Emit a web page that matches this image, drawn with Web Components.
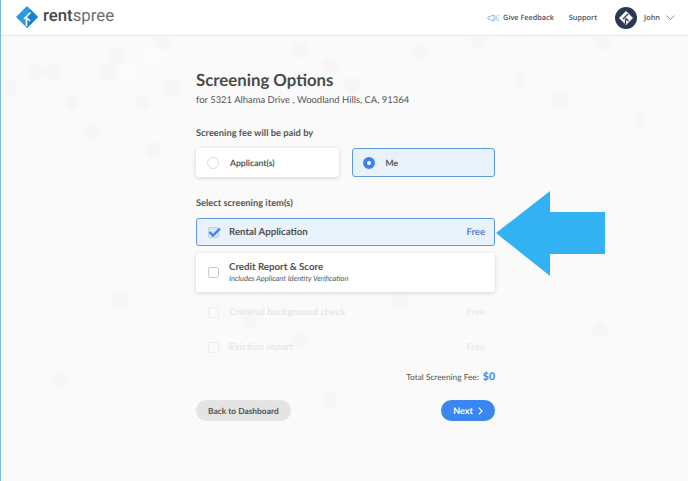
<!DOCTYPE html>
<html lang="en"><head><meta charset="utf-8"><title>Screening Options</title>
<style>
html,body{margin:0;padding:0;height:100%}
body{font-family:Lato,"Open Sans",sans-serif;background:#fafafa;color:#444;overflow:hidden;text-rendering:geometricPrecision}
</style></head><body>
<rs-app></rs-app>
<script>
class RsHeader extends HTMLElement{constructor(){super();this.attachShadow({mode:'open'}).innerHTML=`
<style>
:host{display:flex;align-items:center;height:35px;background:#fff;border-bottom:1px solid #e6e6e6;box-sizing:content-box;padding:0 13px 0 16px;position:relative;z-index:2}
.logo{display:flex;align-items:center;gap:5px}
.logo svg{display:block;margin-top:-2px}
.word{font:400 16.800px/22px Roboto,sans-serif;color:#6a6e72;margin-top:-3px}
.word b{font-weight:500;color:#44484d}
nav{margin-left:auto;display:flex;align-items:center;font:600 7.300px/12px "Open Sans",sans-serif;color:#4c5157}
.fb{display:flex;align-items:center;gap:4px;margin-right:15px}
.av{margin:0 7px 0 18px;display:block}
.chev{margin-left:6px;display:block}
</style>
<div class="logo"><svg width="22" height="22" viewBox="0 0 22 22"><path d="M11 0 L22 11 L11 22 L0 11 Z" fill="#2b9be3"/><path d="M14 3 L22 11 L11 22 L11 19 Z" fill="#1a82cc"/><path d="M8 13 L14.500 6.500 M10.500 12 L10.500 20 M11 12 L14 15" fill="none" stroke="#fff" stroke-width="1.600"/></svg><span class="word"><b>rent</b>spree</span></div>
<nav><span class="fb"><svg width="12" height="8" viewBox="0 0 12 8" fill="none" stroke="#8fbce8" stroke-width="1"><path d="M1 3 L7 1 V7 L1 5 Z"/><path d="M9 1.500 V6.500M10.500 2 L12 1M10.500 4 H12M10.500 6 L12 7"/></svg>Give Feedback</span><span>Support</span>
<svg class="av" width="22" height="22" viewBox="0 0 22 22"><circle cx="11" cy="11" r="11" fill="#2a3a52"/><path d="M11 4 L18 11 L11 18 L4 11 Z" fill="#fff"/><path d="M8 12 L13 7 M10.500 11.500 V17 M11 11.500 L13.500 14" fill="none" stroke="#2a3a52" stroke-width="1.300"/></svg>
<span>John</span><svg class="chev" width="9" height="5" viewBox="0 0 9 5" fill="none" stroke="#777" stroke-width=".8"><path d="M.5 .5 L4.500 4.500 L8.500 .5"/></svg></nav>`}}
customElements.define('rs-header',RsHeader);

class RsChoice extends HTMLElement{constructor(){super();this.attachShadow({mode:'open'}).innerHTML=`
<style>
:host{display:flex;align-items:center;box-sizing:border-box;height:29px;flex:1;border-radius:3px;padding-left:11px;gap:11px;background:#fff;box-shadow:0 1px 4px rgba(0,0,0,.16);font:700 8.600px/12px Lato,sans-serif;color:#555}
:host([selected]){background:#e9f1fb;border:1px solid #5a9be4;box-shadow:none;padding-left:10px}
i{width:10px;height:10px;border-radius:50%;border:1px solid #ddd;background:#fff;display:block;flex:none}
:host([selected]) i{width:4px;height:4px;border:4px solid #3b82ee;background:#fff}
</style><i></i><slot></slot>`}}
customElements.define('rs-choice',RsChoice);

class RsItem extends HTMLElement{constructor(){super();this.attachShadow({mode:'open'}).innerHTML=`
<style>
:host{display:flex;align-items:center;box-sizing:border-box;height:28px;padding:0 10px 0 12px;border-radius:3px;background:#fff;box-shadow:0 1px 4px rgba(0,0,0,.15);font:700 9.700px/13px Lato,sans-serif;color:#505050}
:host([selected]){background:#e9f1fb;border:1px solid #5a9be4;box-shadow:none;padding:0 9px 0 11px}
:host([tall]){height:39px}
:host([disabled]){background:transparent;box-shadow:0 1px 2px rgba(0,0,0,.012);color:#e8e8e8}
.box{width:11px;height:11px;box-sizing:border-box;border:1px solid #ccc;border-radius:2px;background:#fff;margin-right:10px;flex:none;position:relative}
:host([selected]) .box{border-color:#b9d0ec;background:#d9e7f8}
:host([disabled]) .box{border-color:#eee;background:transparent}
svg{position:absolute;left:-1px;top:-2px;display:none}
:host([selected]) svg{display:block}
.t{flex:1;min-width:0}
.sub{display:block;font:italic 400 7.500px/10px Lato,sans-serif;color:#555}
.fee{color:#5c85d6;font-size:9.500px}
:host([disabled]) .fee{color:#ececec}
</style>
<div class="box"><svg width="13" height="12" viewBox="0 0 13 12"><path d="M1.500 6 L5 9.500 L12 2.500" fill="none" stroke="#3b82ee" stroke-width="2.400"/></svg></div>
<div class="t"><slot></slot><span class="sub"><slot name="sub"></slot></span></div>
<span class="fee"><slot name="fee"></slot></span>`}}
customElements.define('rs-item',RsItem);

class RsButton extends HTMLElement{constructor(){super();this.attachShadow({mode:'open'}).innerHTML=`
<style>
:host{display:inline-flex;align-items:center;justify-content:center;height:21px;border-radius:11px;background:#e4e4e4;color:#555;font:700 8.400px/12px Lato,sans-serif;padding:0 12px;box-sizing:border-box}
:host([primary]){background:#3b86f0;color:#fff;width:54px;padding:0;gap:5px;font-size:9px}
svg{display:none}
:host([primary]) svg{display:block}
</style><slot></slot><svg width="5" height="8" viewBox="0 0 5 8" fill="none" stroke="#fff" stroke-width="1.100"><path d="M.8 .7 L4 4 L.8 7.300"/></svg>`}}
customElements.define('rs-button',RsButton);

class RsApp extends HTMLElement{constructor(){super();
const hex=[[37,72],[53,72],[117,56],[108,72],[162,42],[10,88],[172,88],[72,103],[143,103],[92,133],[153,150],[300,50],[330,66],[352,85],[420,52],[478,40],[602,42],[520,80],[560,100],[640,120],[250,320],[300,340],[400,300],[330,400],[600,330],[120,300],[60,380]];
const poly=(x,y)=>{const r=8.500;return `<polygon points="${x-r},${y} ${x-r/2},${y-r*.87} ${x+r/2},${y-r*.87} ${x+r},${y} ${x+r/2},${y+r*.87} ${x-r/2},${y+r*.87}"/>`};
const hexes=hex.map(([x,y])=>poly(x,y)).join('');
const light=[[153,56],[127,72]].map(([x,y])=>poly(x,y)).join('');
this.attachShadow({mode:'open'}).innerHTML=`
<style>
:host{display:block;position:relative;width:688px;height:481px;overflow:hidden;background:#fafafa}
.strip{position:absolute;left:0;top:0;bottom:0;width:1px;background:#7fb6dc;z-index:3}
.bg{position:absolute;left:0;top:36px;z-index:0;filter:blur(1px)}
main{position:relative;z-index:1;display:flex;flex-direction:column;width:299px;margin-left:196px;box-sizing:border-box;padding-top:32px}
h1{margin:0;font:700 16.800px/24px Lato,sans-serif;color:#4a4a4a;height:24px}
.for{font:400 9.450px/14px Lato,sans-serif;color:#555;margin-top:2px}
.lab{font:700 9.300px/12px Lato,sans-serif;color:#555}
.l1{margin-top:19px}
.row{display:flex;gap:13px;margin-top:9px}
.l2{margin-top:20px}
.list{display:flex;flex-direction:column;gap:7px;margin-top:9px}
.list .gap{margin-top:-1px}
.total{display:flex;justify-content:flex-end;align-items:baseline;gap:4px;margin-top:9px;font:400 8.300px/14px Lato,sans-serif;color:#555}
.total b{font:700 10.500px/14px Lato,sans-serif;color:#3b82ee}
.btns{display:flex;justify-content:space-between;margin-top:16px}
.arrow{position:absolute;left:496px;top:191px;z-index:2}
</style>
<div class="strip"></div>
<svg class="bg" width="688" height="445" viewBox="0 36 688 445" aria-hidden="true"><g fill="#f6f6f6">${hexes}</g><g fill="#fcfcfc">${light}</g></svg>
<rs-header></rs-header>
<main>
<h1>Screening Options</h1>
<div class="for">for 5321 Alhama Drive , Woodland Hills, CA, 91364</div>
<div class="lab l1">Screening fee will be paid by</div>
<div class="row"><rs-choice>Applicant(s)</rs-choice><rs-choice selected>Me</rs-choice></div>
<div class="lab l2">Select screening item(s)</div>
<div class="list">
<rs-item selected>Rental Application<span slot="fee">Free</span></rs-item>
<rs-item tall>Credit Report &amp; Score<span slot="sub">Includes Applicant Identity Verification</span></rs-item>
<rs-item disabled class="gap">Criminal background check<span slot="fee">Free</span></rs-item>
<rs-item disabled>Eviction report<span slot="fee">Free</span></rs-item>
</div>
<div class="total">Total Screening Fee: <b>$0</b></div>
<div class="btns"><rs-button>Back to Dashboard</rs-button><rs-button primary>Next</rs-button></div>
</main>
<svg class="arrow" width="109" height="85" viewBox="0 0 109 85"><polygon points="0,42 54,0 54,21 109,21 109,63 54,63 54,85" fill="#33b2f3"/></svg>`}}
customElements.define('rs-app',RsApp);
</script>
</body></html>
